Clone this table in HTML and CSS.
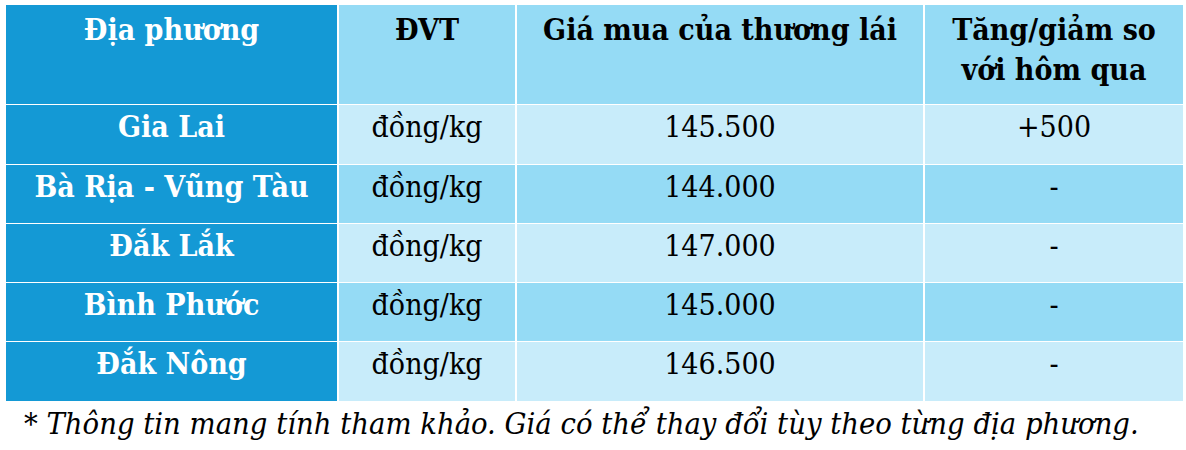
FILE: index.html
```html
<!DOCTYPE html>
<html lang="vi">
<head>
<meta charset="utf-8">
<title>Giá cà phê</title>
<link rel="stylesheet" href="styles.css">
</head>
<body>
<div class="page">
  <div class="table">
    <div class="cell head first">Địa phương</div>
    <div class="cell head">ĐVT</div>
    <div class="cell head">Giá mua của thương lái</div>
    <div class="cell head">Tăng/giảm so<br>với hôm qua</div>

    <div class="cell first">Gia Lai</div>
    <div class="cell light">đồng/kg</div>
    <div class="cell light">145.500</div>
    <div class="cell light">+500</div>

    <div class="cell first">Bà Rịa - Vũng Tàu</div>
    <div class="cell mid">đồng/kg</div>
    <div class="cell mid">144.000</div>
    <div class="cell mid">-</div>

    <div class="cell first">Đắk Lắk</div>
    <div class="cell light">đồng/kg</div>
    <div class="cell light">147.000</div>
    <div class="cell light">-</div>

    <div class="cell first">Bình Phước</div>
    <div class="cell mid">đồng/kg</div>
    <div class="cell mid">145.000</div>
    <div class="cell mid">-</div>

    <div class="cell first">Đắk Nông</div>
    <div class="cell light">đồng/kg</div>
    <div class="cell light">146.500</div>
    <div class="cell light">-</div>
  </div>
  <p class="note">* Thông tin mang tính tham khảo. Giá có thể thay đổi tùy theo từng địa phương.</p>
</div>
</body>
</html>
```
FILE: styles.css
```css
html, body {
  margin: 0;
  padding: 0;
  background: #ffffff;
}

.page {
  padding: 5px 4px 0 6px;
  font-family: "DejaVu Serif Condensed", "DejaVu Serif", serif;
  font-stretch: condensed;
  color: #000000;
}

.table {
  display: grid;
  grid-template-columns: 331px 176px 406px 258px;
  grid-template-rows: 99px 59px 58px 58px 58px 59px;
  column-gap: 2px;
  row-gap: 1px;
  background: #ffffff;
}

.cell {
  font-size: 30px;
  line-height: 40px;
  text-align: center;
  padding-top: 2px;
  box-sizing: border-box;
  white-space: nowrap;
}

.head {
  font-weight: bold;
  background: #95dbf5;
  padding-top: 5px;
}

.first {
  background: #1499d5;
  color: #ffffff;
  font-weight: bold;
}

.light {
  background: #c8ecfa;
}

.mid {
  background: #95dbf5;
}

.note {
  margin: 3px 0 0 18px;
  font-size: 30.6px;
  line-height: 40px;
  font-style: italic;
  white-space: nowrap;
}
```
